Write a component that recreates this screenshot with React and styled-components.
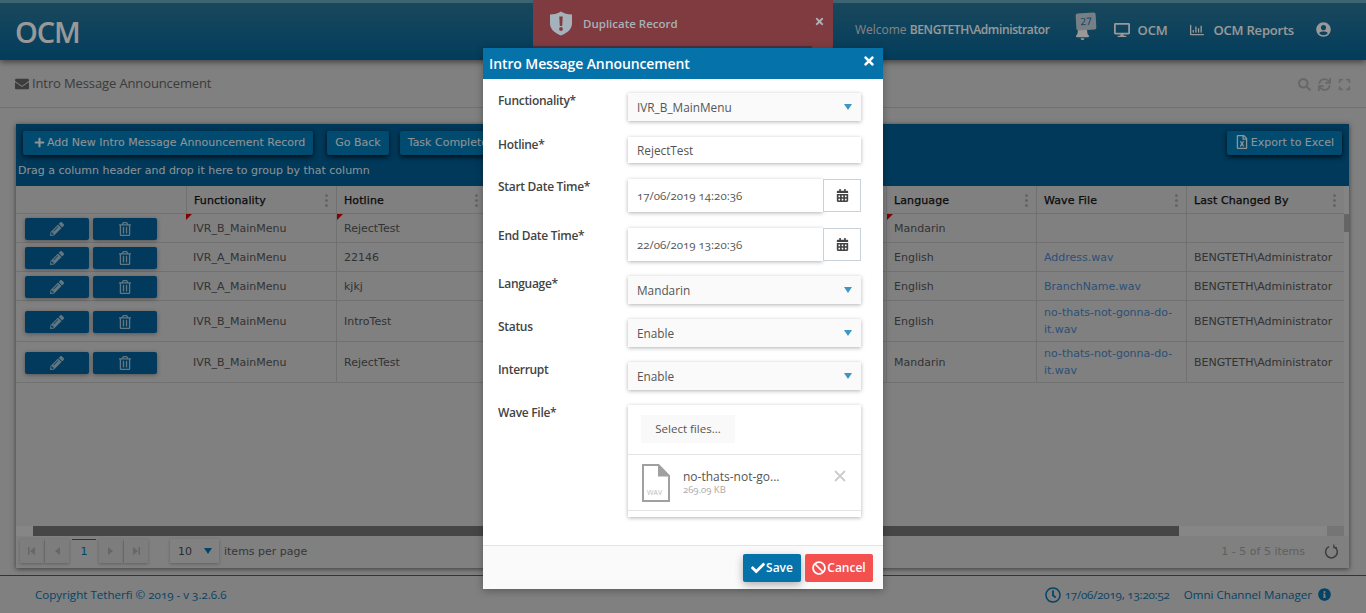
import React from 'react'
import styled, { createGlobalStyle } from 'styled-components'
import {
	FaEnvelope,
	FaPencilAlt,
	FaRegTrashAlt,
	FaSearch,
	FaSync,
	FaExpand,
	FaDesktop,
	FaUserCircle,
	FaBell,
	FaCalendarAlt,
	FaCheck,
	FaBan,
	FaTimes,
	FaRegClock,
	FaInfoCircle,
	FaPlus,
	FaRegFileExcel,
	FaRegChartBar,
} from 'react-icons/fa'

const UI_FONT = '"Open Sans", "Noto Sans", sans-serif'
const GRID_FONT = '"DejaVu Sans", Verdana, sans-serif'
const BRAND = '#0672aa'
const PAGE_BG = '#d5d5d5'
const LINE = '#bcbcbc'

const rows = [
	{ fn: 'IVR_B_MainMenu', hotline: 'RejectTest', language: 'Mandarin', wave: '', by: '', dirty: true, h: 29 },
	{ fn: 'IVR_A_MainMenu', hotline: '22146', language: 'English', wave: 'Address.wav', by: 'BENGTETH\\Administrator', h: 29 },
	{ fn: 'IVR_A_MainMenu', hotline: 'kjkj', language: 'English', wave: 'BranchName.wav', by: 'BENGTETH\\Administrator', h: 29 },
	{ fn: 'IVR_B_MainMenu', hotline: 'IntroTest', language: 'English', wave: 'no-thats-not-gonna-do-it.wav', by: 'BENGTETH\\Administrator', h: 41 },
	{ fn: 'IVR_B_MainMenu', hotline: 'RejectTest', language: 'Mandarin', wave: 'no-thats-not-gonna-do-it.wav', by: 'BENGTETH\\Administrator', h: 41 },
]

const GlobalStyle = createGlobalStyle`
	html, body {
		margin: 0;
		padding: 0;
		height: 100%;
		overflow: hidden;
	}
	body {
		font-family: ${UI_FONT};
		background: ${PAGE_BG};
	}
	* {
		box-sizing: border-box;
	}
`

const Page = styled.div`
	position: relative;
	width: 1366px;
	height: 613px;
	display: flex;
	flex-direction: column;
	overflow: hidden;
	background: ${PAGE_BG};
`

const Header = styled.header`
	height: 60px;
	flex: none;
	display: flex;
	align-items: center;
	padding: 0 35px 0 15px;
	border-top: 3px solid #64a7c0;
	background: linear-gradient(#2b7899, #05669a);
	box-shadow: 0 2px 6px rgba(0, 0, 0, 0.5);
	color: #fff;
	position: relative;
	z-index: 1;
`

const Logo = styled.div`
	font-size: 29px;
	font-weight: 600;
	letter-spacing: -1.1px;
	color: #fff;
`

const HeaderRight = styled.div`
	margin-left: auto;
	display: flex;
	align-items: center;
	font-size: 12px;
	margin-top: -4px;
`

const Welcome = styled.span`
	margin-right: 25px;
	color: #dcdcdc;
	b {
		font-weight: 600;
		color: #fff;
		letter-spacing: -0.36px;
	}
`

const BellWrap = styled.span`
	position: relative;
	display: flex;
	width: 22px;
	height: 24px;
	margin-right: 17px;
	font-size: 15px;
	align-items: flex-end;
	margin-top: -3px;
`

const BellBadge = styled.span`
	position: absolute;
	left: 1px;
	top: -3px;
	width: 20px;
	height: 17px;
	background: #c8d4dc;
	color: ${BRAND};
	border-radius: 2px;
	font-size: 10px;
	line-height: 17px;
	text-align: center;
	transform: rotate(-3deg);
`

const NavLink = styled.span`
	display: flex;
	align-items: center;
	gap: ${(p) => p.$gap || 9}px;
	margin-right: ${(p) => p.$mr || 0}px;
	font-weight: 600;
	font-size: 13px;
	letter-spacing: -0.2px;
	svg {
		font-size: ${(p) => p.$icon || 16}px;
	}
`

const TitleBar = styled.div`
	height: 48px;
	flex: none;
	display: flex;
	align-items: center;
	padding: 0 15px;
	border-bottom: 1px solid ${LINE};
	color: #646464;
`

const PageTitle = styled.h1`
	margin: 0;
	display: flex;
	align-items: center;
	gap: 3px;
	font-size: 13px;
	font-weight: 400;
	line-height: 1;
	letter-spacing: -0.12px;
	svg {
		font-size: 14px;
	}
`

const TitleTools = styled.div`
	margin-left: auto;
	display: flex;
	gap: 7px;
	color: #aeaeae;
	font-size: 13px;
	margin-top: 2px;
`

const Content = styled.main`
	flex: none;
	height: 467px;
	padding: 16px 17px 7px 16px;
`

const Panel = styled.section`
	height: 100%;
	display: flex;
	flex-direction: column;
	box-shadow: 0 1px 5px rgba(0, 0, 0, 0.55);
`

const GridBar = styled.div`
	height: 62px;
	flex: none;
	background: #005f96;
	padding: 7px 7px 0 7px;
	display: flex;
	flex-direction: column;
`

const GridActions = styled.div`
	display: flex;
	gap: 10px;
`

const BarButton = styled.button`
	height: 24px;
	padding: 0 8px 2px ${(p) => p.$pl || 8}px;
	margin: 0;
	margin-right: ${(p) => p.$mr || 0}px;
	margin-left: ${(p) => (p.$push ? 'auto' : 0)};
	border: none;
	border-radius: 2px;
	background: #027dbb;
	color: #f0f6fa;
	font-family: ${GRID_FONT};
	font-size: 11px;
	display: flex;
	align-items: center;
	gap: 2px;
	box-shadow: 0 2px 5px rgba(0, 0, 0, 0.8);
	white-space: nowrap;
`

const GroupHint = styled.div`
	margin: 9px 0 0 -5px;
	font-family: ${GRID_FONT};
	font-size: 11px;
	color: #e8f2f8;
	line-height: 14px;
`

const GridBody = styled.div`
	flex: 1;
	min-height: 0;
	position: relative;
	padding-right: 5px;
`

const GridRow = styled.div`
	display: grid;
	grid-template-columns: 170px 150px 150px 400px 150px 150px 158px;
	height: ${(p) => p.$h}px;
	border-bottom: 1px solid ${LINE};
`

const HeadCell = styled.div`
	position: relative;
	display: flex;
	align-items: center;
	padding: 2px 0 0 7px;
	font-family: ${GRID_FONT};
	font-size: 11px;
	font-weight: 500;
	color: #111;
	-webkit-text-stroke: 0.25px #111;
	letter-spacing: 0.1px;
	& + & {
		border-left: 1px solid ${LINE};
	}
`

const ColMenu = styled.span`
	position: absolute;
	right: 8px;
	top: 8px;
	width: 3px;
	height: 3px;
	border-radius: 50%;
	background: #a8a8a8;
	box-shadow: 0 5px 0 #a8a8a8, 0 10px 0 #a8a8a8;
`

const Cell = styled.div`
	position: relative;
	display: flex;
	align-items: center;
	padding: 0 7px;
	font-family: ${GRID_FONT};
	font-size: 11px;
	line-height: 17px;
	color: #555;
	& + & {
		border-left: 1px solid ${LINE};
	}
`

const DirtyMark = styled.span`
	position: absolute;
	left: 0;
	top: 0;
	width: 0;
	height: 0;
	border-top: 6px solid #d80000;
	border-right: 6px solid transparent;
`

const WaveLink = styled.span`
	color: #4a86c8;
`

const ActionCell = styled.div`
	display: flex;
	align-items: center;
	gap: 4px;
	padding: 1px 0 0 9px;
`

const RowButton = styled.button`
	width: 64px;
	height: 22px;
	padding: 0;
	border: none;
	border-radius: 2px;
	background: #02629a;
	color: #a6c6d6;
	font-size: 14px;
	display: flex;
	align-items: center;
	justify-content: center;
	box-shadow: 0 1px 4px rgba(0, 0, 0, 0.35);
`

const VScroll = styled.div`
	position: absolute;
	right: 0;
	top: 0;
	bottom: 0;
	width: 5px;
	background: #dcdcdc;
	&::before {
		content: '';
		position: absolute;
		left: 0;
		right: 0;
		top: 28px;
		height: 18px;
		background: #a8a8a8;
	}
`

const HScroll = styled.div`
	height: 10px;
	flex: none;
	margin-top: auto;
	background: #e0e0e0;
	display: flex;
`

const HThumb = styled.div`
	margin-left: 17px;
	width: 1146px;
	background: #757575;
`

const HCorner = styled.div`
	margin-left: auto;
	width: 17px;
	background: #c4c4c4;
`

const GridInner = styled.div`
	height: 100%;
	display: flex;
	flex-direction: column;
`

const Pager = styled.div`
	height: 32px;
	flex: none;
	display: flex;
	align-items: center;
	padding: 0 10px 2px 4px;
	font-family: ${GRID_FONT};
	font-size: 11px;
	color: #5c5c5c;
`

const PageButton = styled.span`
	width: 24px;
	height: 24px;
	margin-right: 1px;
	background: #d0d0d0;
	box-shadow: 0 1px 3px rgba(0, 0, 0, 0.25);
	display: flex;
	align-items: center;
	justify-content: center;
	color: #acacac;
`

const PageNumber = styled.span`
	width: 24px;
	height: 24px;
	margin: 0 3px 0 2px;
	border-top: 1px solid ${BRAND};
	display: flex;
	align-items: center;
	justify-content: center;
	color: ${BRAND};
`

const SizeSelect = styled.span`
	width: 49px;
	height: 24px;
	margin: 0 5px 0 21px;
	padding: 0 7px 0 8px;
	display: flex;
	align-items: center;
	justify-content: space-between;
	background: #d8d8d8;
	box-shadow: 0 1px 3px rgba(0, 0, 0, 0.25);
	color: #4a4a4a;
`

const Arrow = styled.span`
	width: 0;
	height: 0;
	border-left: 4px solid transparent;
	border-right: 4px solid transparent;
	border-top: 6px solid ${(p) => p.$color || BRAND};
`

const PagerInfo = styled.span`
	margin-left: auto;
	color: #a0a0a0;
	margin-right: 19px;
`

const Footer = styled.footer`
	flex: 1;
	display: flex;
	align-items: center;
	padding: 0 35px;
	border-top: 1px solid ${BRAND};
	color: ${BRAND};
	font-size: 11.6px;
	font-variant-numeric: oldstyle-nums;
`

const FooterRight = styled.div`
	margin-left: auto;
	display: flex;
	align-items: center;
	svg {
		flex: none;
	}
`

const FooterDate = styled.span`
	margin: 0 14px 0 4px;
	letter-spacing: -0.2px;
`

const FooterInfo = styled.span`
	display: flex;
	margin-left: 6px;
`

const Overlay = styled.div`
	position: absolute;
	inset: 0;
	background: rgba(0, 0, 0, 0.4);
	z-index: 2;
`

const Toast = styled.div`
	position: absolute;
	left: 533px;
	top: 0;
	width: 300px;
	height: 49px;
	display: flex;
	align-items: center;
	padding: 0 0 3px 16px;
	background: #7f3b3f;
	border-radius: 0 0 3px 3px;
	color: #a8b0ba;
	font-size: 11.5px;
	font-weight: 600;
	z-index: 3;
	&::after {
		content: '';
		position: absolute;
		left: 0;
		bottom: 0;
		width: 279px;
		height: 3px;
		background: #4b3241;
	}
`

const ToastText = styled.span`
	margin-left: 10px;
`

const ToastClose = styled.span`
	margin-left: auto;
	margin-right: 8px;
	margin-top: -4px;
	font-size: 11px;
	display: flex;
`

const Modal = styled.div`
	position: absolute;
	left: 483px;
	top: 48px;
	width: 400px;
	height: 541px;
	display: flex;
	flex-direction: column;
	background: #fff;
	box-shadow: 0 2px 8px rgba(0, 0, 0, 0.3);
	z-index: 4;
`

const ModalHead = styled.div`
	height: 31px;
	flex: none;
	display: flex;
	align-items: center;
	padding: 0 7px 0 6px;
	background: ${BRAND};
	color: #fff;
`

const ModalTitle = styled.h2`
	margin: 0;
	font-size: 14px;
	font-weight: 600;
	letter-spacing: -0.1px;
`

const ModalClose = styled.span`
	margin-left: auto;
	display: flex;
	font-size: 14px;
	margin-top: -5px;
`

const Form = styled.div`
	flex: 1;
	padding: 14px 22px 0 15px;
`

const FormRow = styled.div`
	display: grid;
	grid-template-columns: 130px 233px;
	margin-bottom: ${(p) => p.$mb ?? 15}px;
`

const Label = styled.label`
	font-size: 12px;
	line-height: 16px;
	font-weight: 600;
	color: #444;
	letter-spacing: -0.3px;
`

const Field = styled.div`
	height: ${(p) => p.$h || 28}px;
	display: flex;
	align-items: center;
	justify-content: space-between;
	padding: 0 9px 1px;
	background: ${(p) => p.$bg || '#fafafa'};
	box-shadow: 0 1px 4px rgba(0, 0, 0, 0.3);
	font-size: 11.8px;
	color: #555;
`

const DateGroup = styled.div`
	display: flex;
	height: 33px;
`

const DateInput = styled(Field)`
	flex: 1;
	height: 33px;
	padding-bottom: 0;
	font-size: 11.5px;
	font-variant-numeric: oldstyle-nums;
`

const DateButton = styled.span`
	width: 38px;
	display: flex;
	align-items: center;
	justify-content: center;
	border: 1px solid #c8d2da;
	color: #444;
	font-size: 13px;
	background: #fff;
`

const UploadBox = styled.div`
	height: 112px;
	background: #fff;
	box-shadow: 0 1px 4px rgba(0, 0, 0, 0.3);
	display: flex;
	flex-direction: column;
`

const UploadHead = styled.div`
	height: 50px;
	flex: none;
	padding: 10px 13px;
	border-bottom: 1px solid #e4e4e4;
`

const SelectFiles = styled.span`
	display: inline-flex;
	align-items: center;
	justify-content: center;
	width: 94px;
	height: 28px;
	padding-bottom: 2px;
	background: #f9f9f9;
	font-size: 11.5px;
	color: #555;
`

const FileRow = styled.div`
	height: 56px;
	flex: none;
	display: flex;
	align-items: center;
	padding: 0 15px 0 14px;
	border-bottom: 1px solid #e4e4e4;
`

const FileMeta = styled.div`
	margin-left: 13px;
	margin-top: -1px;
	display: flex;
	flex-direction: column;
`

const FileName = styled.span`
	font-size: 12px;
	line-height: 15px;
	color: #555;
`

const FileSize = styled.span`
	font-size: 9.5px;
	line-height: 12px;
	color: #aaa;
	font-variant-numeric: oldstyle-nums;
`

const FileRemove = styled.span`
	margin-left: auto;
	margin-top: -14px;
	display: flex;
`

const ModalFoot = styled.div`
	height: 44px;
	flex: none;
	display: flex;
	justify-content: flex-end;
	align-items: center;
	gap: 4px;
	padding: 0 10px;
	background: #fafafa;
	border-top: 1px solid #e4e4e4;
`

const FootButton = styled.button`
	height: 28px;
	padding: 0;
	width: ${(p) => p.$w}px;
	border: none;
	border-radius: 2px;
	background: ${(p) => p.$bg};
	color: #fff;
	font-family: ${UI_FONT};
	font-size: 12px;
	font-weight: 600;
	display: flex;
	align-items: center;
	justify-content: center;
	gap: 1px;
	box-shadow: ${(p) => (p.$shadow ? '0 3px 8px rgba(0,0,0,.3)' : 'none')};
	svg {
		font-size: 14px;
	}
`

// kendo pager glyphs
const PagerIcon = ({ dir, bar }) => (
	<svg width="10" height="10" viewBox="0 0 10 10" fill="currentColor">
		{dir === 'left' ? <path d="M8 1v8L3 5z" /> : <path d="M2 1v8l5-4z" />}
		{bar && (dir === 'left' ? <rect x="1" y="1" width="1.5" height="8" /> : <rect x="7.5" y="1" width="1.5" height="8" />)}
	</svg>
)

const ShieldIcon = () => (
	<svg width="24" height="25" viewBox="0 0 24 25">
		<path d="M12 .5c3 2 6.5 3 11 3v9c0 5.500-4.500 9.500-11 12-6.500-2.500-11-6.500-11-12v-9c4.500 0 8-1 11-3z" fill="#a5b2bc" />
		<path d="M10.3 5.500h3.400l-.5 9.500h-2.400z" fill="#7f3b3f" />
		<circle cx="12" cy="18" r="1.900" fill="#7f3b3f" />
	</svg>
)

const WavIcon = () => (
	<svg width="28" height="38" viewBox="0 0 28 38">
		<path d="M1 1h15.500L27 12v25H1z" fill="#fff" stroke="#a0a0a0" strokeWidth="2" />
		<path d="M16 0l12 12.500H16z" fill="#a0a0a0" />
		<text x="5" y="31" fontSize="7" fill="#bbb" fontFamily="Open Sans, sans-serif">WAV</text>
	</svg>
)

const RemoveIcon = () => (
	<svg width="12" height="12" viewBox="0 0 12 12" fill="none" stroke="#ccc" strokeWidth="1.8">
		<path d="M1 1l10 10M11 1L1 11" />
	</svg>
)

const RefreshIcon = () => (
	<svg width="15" height="15" viewBox="0 0 16 16" fill="none" stroke="#666" strokeWidth="1.600">
		<path d="M11 3A6.300 6.300 0 1 1 5.300 2.800" />
		<path d="M10.500.5v3.300h3.300" strokeWidth="1.300" />
	</svg>
)

const App = () => {
	return (
		<Page>
			<GlobalStyle />
			<Header>
				<Logo>OCM</Logo>
				<HeaderRight>
					<Welcome>
						Welcome <b>BENGTETH\Administrator</b>
					</Welcome>
					<BellWrap>
						<FaBell />
						<BellBadge>27</BellBadge>
					</BellWrap>
					<NavLink $gap={8} $mr={23}>
						<FaDesktop />
						OCM
					</NavLink>
					<NavLink $gap={9} $mr={22} $icon={14}>
						<FaRegChartBar />
						OCM Reports
					</NavLink>
					<NavLink $icon={15}>
						<FaUserCircle />
					</NavLink>
				</HeaderRight>
			</Header>
			<TitleBar>
				<PageTitle>
					<FaEnvelope />
					Intro Message Announcement
				</PageTitle>
				<TitleTools>
					<FaSearch />
					<FaSync />
					<FaExpand />
				</TitleTools>
			</TitleBar>
			<Content>
				<Panel>
					<GridBar>
						<GridActions>
							<BarButton $mr={4} $pl={11}>
								<FaPlus size={11} />
								Add New Intro Message Announcement Record
							</BarButton>
							<BarButton $mr={1}>Go Back</BarButton>
							<BarButton>Task Complete</BarButton>
							<BarButton $push>
								<FaRegFileExcel size={14} />
								Export to Excel
							</BarButton>
						</GridActions>
						<GroupHint>Drag a column header and drop it here to group by that column</GroupHint>
					</GridBar>
					<GridBody>
						<GridInner>
							<GridRow $h={28}>
								<HeadCell />
								<HeadCell>
									Functionality
									<ColMenu />
								</HeadCell>
								<HeadCell>
									Hotline
									<ColMenu />
								</HeadCell>
								<HeadCell />
								<HeadCell>
									Language
									<ColMenu />
								</HeadCell>
								<HeadCell>
									Wave File
									<ColMenu />
								</HeadCell>
								<HeadCell>
									Last Changed By
									<ColMenu />
								</HeadCell>
							</GridRow>
							{rows.map((row, i) => (
								<GridRow key={i} $h={row.h}>
									<ActionCell>
										<RowButton>
											<FaPencilAlt />
										</RowButton>
										<RowButton>
											<FaRegTrashAlt />
										</RowButton>
									</ActionCell>
									<Cell>
										{row.dirty && <DirtyMark />}
										{row.fn}
									</Cell>
									<Cell>
										{row.dirty && <DirtyMark />}
										{row.hotline}
									</Cell>
									<Cell />
									<Cell>
										{row.dirty && <DirtyMark />}
										{row.language}
									</Cell>
									<Cell>
										<WaveLink>{row.wave}</WaveLink>
									</Cell>
									<Cell>{row.by}</Cell>
								</GridRow>
							))}
							<HScroll>
								<HThumb />
								<HCorner />
							</HScroll>
						</GridInner>
						<VScroll />
					</GridBody>
					<Pager>
						<PageButton>
							<PagerIcon dir="left" bar />
						</PageButton>
						<PageButton>
							<PagerIcon dir="left" />
						</PageButton>
						<PageNumber>1</PageNumber>
						<PageButton>
							<PagerIcon dir="right" />
						</PageButton>
						<PageButton>
							<PagerIcon dir="right" bar />
						</PageButton>
						<SizeSelect>
							10
							<Arrow />
						</SizeSelect>
						items per page
						<PagerInfo>1 - 5 of 5 items</PagerInfo>
						<RefreshIcon />
					</Pager>
				</Panel>
			</Content>
			<Footer>
				Copyright Tetherfi © 2019 - v 3.2.6.6
				<FooterRight>
					<FaRegClock size={16} />
					<FooterDate>17/06/2019, 13:20:52</FooterDate>
					Omni Channel Manager
					<FooterInfo>
						<FaInfoCircle size={13} />
					</FooterInfo>
				</FooterRight>
			</Footer>
			<Overlay />
			<Toast>
				<ShieldIcon />
				<ToastText>Duplicate Record</ToastText>
				<ToastClose>
					<FaTimes />
				</ToastClose>
			</Toast>
			<Modal>
				<ModalHead>
					<ModalTitle>Intro Message Announcement</ModalTitle>
					<ModalClose>
						<FaTimes />
					</ModalClose>
				</ModalHead>
				<Form>
					<FormRow $mb={16}>
						<Label>Functionality*</Label>
						<Field>
							IVR_B_MainMenu
							<Arrow $color="#3d97c4" />
						</Field>
					</FormRow>
					<FormRow $mb={16}>
						<Label>Hotline*</Label>
						<Field $h={26} $bg="#fff">RejectTest</Field>
					</FormRow>
					<FormRow $mb={16}>
						<Label>Start Date Time*</Label>
						<DateGroup>
							<DateInput $bg="#fff">17/06/2019 14:20:36</DateInput>
							<DateButton>
								<FaCalendarAlt />
							</DateButton>
						</DateGroup>
					</FormRow>
					<FormRow>
						<Label>End Date Time*</Label>
						<DateGroup>
							<DateInput $bg="#fff">22/06/2019 13:20:36</DateInput>
							<DateButton>
								<FaCalendarAlt />
							</DateButton>
						</DateGroup>
					</FormRow>
					<FormRow>
						<Label>Language*</Label>
						<Field>
							Mandarin
							<Arrow $color="#3d97c4" />
						</Field>
					</FormRow>
					<FormRow>
						<Label>Status</Label>
						<Field>
							Enable
							<Arrow $color="#3d97c4" />
						</Field>
					</FormRow>
					<FormRow>
						<Label>Interrupt</Label>
						<Field>
							Enable
							<Arrow $color="#3d97c4" />
						</Field>
					</FormRow>
					<FormRow $mb={0}>
						<Label>Wave File*</Label>
						<UploadBox>
							<UploadHead>
								<SelectFiles>Select files...</SelectFiles>
							</UploadHead>
							<FileRow>
								<WavIcon />
								<FileMeta>
									<FileName>no-thats-not-go...</FileName>
									<FileSize>269.09 KB</FileSize>
								</FileMeta>
								<FileRemove>
									<RemoveIcon />
								</FileRemove>
							</FileRow>
						</UploadBox>
					</FormRow>
				</Form>
				<ModalFoot>
					<FootButton $w={58} $bg={BRAND} $shadow>
						<FaCheck />
						Save
					</FootButton>
					<FootButton $w={68} $bg="#f4504f">
						<FaBan />
						Cancel
					</FootButton>
				</ModalFoot>
			</Modal>
		</Page>
	)
}

export default App
